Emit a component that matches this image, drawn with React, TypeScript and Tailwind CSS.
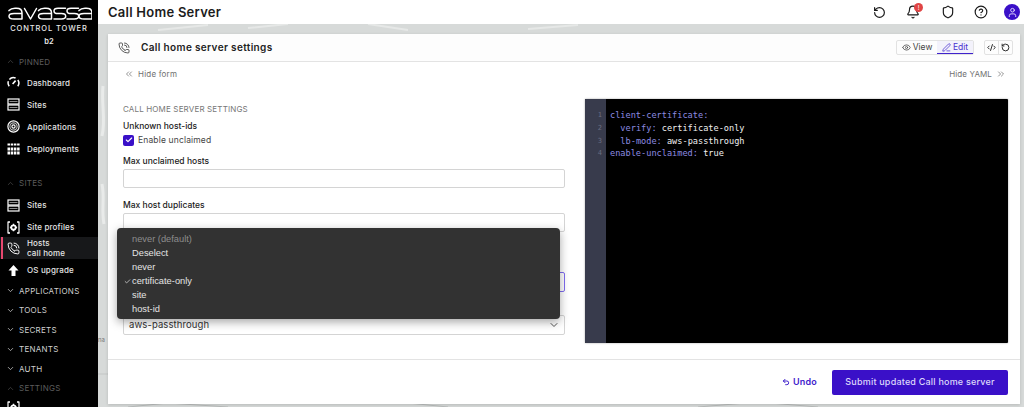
import React from "react";
import { ChevronUp, ChevronDown, ChevronsLeft, ChevronsRight, PhoneCall, RotateCcw, Bell, Shield, CircleHelp, User, Eye, PenLine, CodeXml, Undo2, Check } from "lucide-react";

function Logo() {
  const a = (x: number) => (
    <path d={`M${x + 1} 3.6 Q${x + 3} 1.3 ${x + 7} 1.3 H${x + 8.5} Q${x + 14} 1.3 ${x + 14} 6 V12 H${x + 6} Q${x + 1} 12 ${x + 1} 9.2 Q${x + 1} 6.6 ${x + 6} 6.6 H${x + 14}`} />
  );
  const s = (x: number) => (
    <path d={`M${x + 12.5} 1.3 H${x + 5} Q${x + 1} 1.3 ${x + 1} 4 Q${x + 1} 6.6 ${x + 5} 6.6 H${x + 8.5} Q${x + 12.7} 6.6 ${x + 12.7} 9.3 Q${x + 12.7} 12 ${x + 8.5} 12 H${x + 1}`} />
  );
  return (
    <svg width="84" height="14" viewBox="0 0 84 14" fill="none" stroke="white" strokeWidth="1.5" strokeLinecap="round" strokeLinejoin="round">
      {a(0)}
      <path d="M16.5 1.5 L22.5 12 L28.5 1.5" />
      {a(29.5)}
      {s(45)}
      {s(58)}
      {a(70)}
    </svg>
  );
}

const I = ({ children }: { children: React.ReactNode }) => (
  <svg width="13" height="13" viewBox="0 0 13 13" fill="none" stroke="white" strokeWidth="1.2">{children}</svg>
);
const GaugeIcon = () => (
  <I>
    <path d="M2.2 10.2 A5.2 5.2 0 0 1 1.4 5.2" strokeWidth="1.5" />
    <path d="M2.4 3.4 A5.2 5.2 0 0 1 8.6 2" strokeWidth="1.5" />
    <path d="M10.8 4 A5.2 5.2 0 0 1 10.8 10.2" strokeWidth="1.5" />
    <path d="M5.6 8 L8.6 4.6" strokeWidth="1.6" />
  </I>
);
const ServerIcon = () => (
  <I>
    <rect x="1" y="1" width="11" height="5" />
    <rect x="1" y="7" width="11" height="5" />
    <path d="M2.5 3.5 H10.5 M2.5 9.5 H10.5" stroke="#8a8a8a" strokeWidth="1.2" />
  </I>
);
const AppsIcon = () => (
  <I>
    <circle cx="6.5" cy="6.5" r="5.6" />
    <circle cx="6.5" cy="6.5" r="3.6" stroke="#b8b8b8" />
    <circle cx="6.5" cy="6.5" r="1.6" />
  </I>
);
const DeployIcon = () => (
  <svg width="13" height="13" viewBox="0 0 13 13" fill="white">
    {[1.5, 5.5, 9.5].map((y, r) =>
      [0.5, 3.7, 6.9, 10.1].map((x, c) => (
        <rect key={`${r}-${c}`} x={x} y={y} width="2.5" height={r === 0 ? 2 : 3} />
      ))
    )}
  </svg>
);
const ProfileIcon = () => (
  <I>
    <path d="M3 1 H1 V12 H3 M10 1 H12 V12 H10" />
    <path d="M1 1 H12 M1 12 H12" strokeDasharray="2 7" />
    <circle cx="6.5" cy="6.5" r="2.2" strokeWidth="1.8" />
    <path d="M6.5 2.8 V4 M6.5 9 V10.2 M2.9 6.5 H4.1 M8.9 6.5 H10.1" strokeWidth="1.4" />
  </I>
);
const UpIcon = () => (
  <svg width="13" height="13" viewBox="0 0 13 13" fill="white"><path d="M6.5 1 L11.5 6.5 H8.5 V12 H4.5 V6.5 H1.5 Z" /></svg>
);

function NavItem({ icon, label }: { icon: React.ReactNode; label: React.ReactNode }) {
  return (
    <div className="flex items-center h-[22px] pl-[7px] gap-[7px] text-[8px] font-medium text-[#e4e4e4] tracking-[0.15px]">
      <span className="w-[13px] flex justify-center shrink-0">{icon}</span>
      <span>{label}</span>
    </div>
  );
}

function Section({ label, open, dim }: { label: string; open?: boolean; dim?: boolean }) {
  return (
    <div className={`flex items-center h-[19.5px] pl-[6px] gap-[4px] text-[8px] tracking-[0.25px] ${dim ? "text-[#5c5c5c]" : "text-[#cfcfcf]"}`}>
      {open ? <ChevronUp size={9} strokeWidth={1.5} /> : <ChevronDown size={9} strokeWidth={2} />}
      <span>{label}</span>
    </div>
  );
}

function Field({ label, mt }: { label: string; mt: string }) {
  return (
    <div className={mt}>
      <div className="text-[8.5px] leading-[10px] font-medium text-[#222]">{label}</div>
      <div className="mt-[3px] h-[19px] rounded-[2px] border border-[#d4d4d4] bg-white" />
    </div>
  );
}

function MapBg() {
  return (
    <svg className="absolute inset-0" width="926" height="383" viewBox="0 0 926 383" fill="none">
      <path d="M5 62 C3 80 8 95 4 112 M4 160 C7 175 3 185 6 200" stroke="#e9ebea" strokeWidth="3" />
      <path d="M60 6 L110 1 M150 4 L190 0 M270 0 L310 6 M430 5 L480 1" stroke="#e6e8e7" strokeWidth="2" />
      <path d="M30 383 L70 379 L130 383 M310 379 L350 383 M600 383 L660 378 L720 383" stroke="#b9bcbb" strokeWidth="1" />
      <path d="M0 350 H10" stroke="#c3c6c5" />
    </svg>
  );
}

const menu = ["never (default)", "Deselect", "never", "certificate-only", "site", "host-id"];

export default function App() {
  return (
    <div className="relative w-[1024px] h-[407px] overflow-hidden flex bg-white font-['Inter',sans-serif]">
      <aside className="w-[98px] shrink-0 h-full bg-black overflow-hidden">
        <div className="pt-[7px] pl-[8px]"><Logo /></div>
        <div className="text-center text-[7.5px] leading-[10px] tracking-[0.9px] font-medium text-[#e8e8e8] mt-[3px]">CONTROL TOWER</div>
        <div className="text-center text-[7.5px] leading-[10px] font-semibold text-[#e8e8e8] mt-[3px]">b2</div>
        <div className="mt-[5px]"><Section label="PINNED" open dim /></div>
        <div>
          <NavItem icon={<GaugeIcon />} label="Dashboard" />
          <NavItem icon={<ServerIcon />} label="Sites" />
          <NavItem icon={<AppsIcon />} label="Applications" />
          <NavItem icon={<DeployIcon />} label="Deployments" />
        </div>
        <div className="mt-[14px]"><Section label="SITES" open dim /></div>
        <div className="mt-[1px]">
          <NavItem icon={<ServerIcon />} label="Sites" />
          <NavItem icon={<ProfileIcon />} label="Site profiles" />
          <div className="relative -mt-[1px]">
            <div className="absolute left-[1px] top-0 bottom-0 w-[2px] bg-[#e8486f]" />
            <div className="flex items-center h-[22px] pl-[7px] gap-[7px] text-[8px] font-medium text-[#e4e4e4] tracking-[0.15px] bg-[#17181a]">
              <PhoneCall size={13} strokeWidth={1.8} className="shrink-0 text-white" />
              <span className="leading-[10px]">Hosts<br />call home</span>
            </div>
          </div>
          <NavItem icon={<UpIcon />} label="OS upgrade" />
        </div>
        <div>
          <Section label="APPLICATIONS" />
          <Section label="TOOLS" />
          <Section label="SECRETS" />
          <Section label="TENANTS" />
          <Section label="AUTH" />
          <Section label="SETTINGS" open dim />
        </div>
        <div className="h-[8px] mt-[3px] pl-[7px] overflow-hidden"><ProfileIcon /></div>
      </aside>

      <div className="flex-1 min-w-0 flex flex-col">
        <header className="h-[24px] shrink-0 bg-white flex items-center pl-[10px] pr-[4px]">
          <h1 className="text-[13px] font-semibold text-[#1c1c1c] tracking-[0.25px] mt-[1px]">Call Home Server</h1>
          <div className="ml-auto flex items-center text-[#1a1a1a]">
            <RotateCcw size={13} strokeWidth={2.2} />
            <div className="relative ml-[20px]">
              <Bell size={14} strokeWidth={2} />
              <span className="absolute left-[8px] -top-[2px] w-[9px] h-[9px] rounded-full bg-[#e04545] text-white text-[6px] leading-[9px] text-center">!</span>
            </div>
            <Shield size={14} strokeWidth={2} className="ml-[21px]" />
            <CircleHelp size={14} strokeWidth={2} className="ml-[19px]" />
            <span className="ml-[16px] w-[16px] h-[16px] rounded-full bg-[#3a10c8] flex items-center justify-center">
              <User size={11} color="#e8e0ff" />
            </span>
          </div>
        </header>

        <main className="relative flex-1 bg-[#d7dad9] pl-[10px] pr-[4px] pt-[10px] pb-[3px]">
          <MapBg />
          <span className="absolute left-[0px] top-[311px] text-[6px] text-[#777]">na</span>
          <section className="relative h-full bg-white flex flex-col shadow-[0_1px_3px_rgba(0,0,0,0.15)]">
            <div className="h-[28px] shrink-0 border-b border-[#e3e3e3] bg-[#fdfdfd] flex items-center pl-[10px] pr-[7px]">
              <PhoneCall size={12} strokeWidth={1.6} className="text-[#333]" />
              <h2 className="ml-[11px] text-[10px] font-semibold text-[#222] tracking-[0.35px]">Call home server settings</h2>
              <div className="ml-auto flex items-center">
                <div className="flex h-[15px] rounded-[2px] border border-[#e2e2e2] text-[8.5px] text-[#444]">
                  <span className="w-[40px] flex items-center justify-center gap-[2px]"><Eye size={9} />View</span>
                  <span className="w-[36px] flex items-center justify-center gap-[2px] bg-[#f3f2fb] text-[#4a30d0] border-b border-[#3f22cc]"><PenLine size={9} />Edit</span>
                </div>
                <div className="ml-[10px] flex h-[15px] w-[29px] rounded-[2px] border border-[#e2e2e2] text-[#222]">
                  <span className="flex-1 flex items-center justify-center border-r border-[#e2e2e2]"><CodeXml size={9} strokeWidth={2.5} /></span>
                  <span className="flex-1 flex items-center justify-center"><RotateCcw size={9} strokeWidth={2.5} /></span>
                </div>
              </div>
            </div>

            <div className="flex-1 min-h-0 flex flex-col">
              <div className="flex justify-between items-center h-[24px] pl-[16px] pr-[14px] text-[8px] text-[#6f6f6f] tracking-[0.1px]">
                <span className="flex items-center gap-[4px] tracking-[0.2px]"><ChevronsLeft size={10} strokeWidth={1.8} />Hide form</span>
                <span className="flex items-center gap-[4px]">Hide YAML<ChevronsRight size={10} strokeWidth={1.8} /></span>
              </div>
              <div className="flex-1 min-h-0 flex pl-[15px] pr-[12px] pb-[15px]">
                <form className="relative w-[442px] shrink-0 pt-[18px]">
                  <div className="text-[8px] leading-[10px] text-[#777] tracking-[0.15px]">CALL HOME SERVER SETTINGS</div>
                  <div className="mt-[7px] text-[8.5px] leading-[10px] font-medium text-[#222]">Unknown host-ids</div>
                  <label className="mt-[3px] flex items-center gap-[4px] text-[8.5px] text-[#444] tracking-[0.15px]">
                    <span className="w-[11px] h-[11px] rounded-[2px] bg-[#3a10c8] flex items-center justify-center"><Check size={8} color="white" strokeWidth={3.5} /></span>
                    Enable unclaimed
                  </label>
                  <Field label="Max unclaimed hosts" mt="mt-[9px]" />
                  <Field label="Max host duplicates" mt="mt-[12px]" />
                  <div className="mt-[40px] h-[20px] rounded-[2px] border border-[#7f6cf0] bg-white" />
                  <div className="mt-[23px] h-[20px] rounded-[2px] border border-[#d4d4d4] bg-white flex items-center pl-[5px] pr-[4px] text-[9.5px] text-[#333] tracking-[0.1px]">
                    aws-passthrough
                    <ChevronDown size={12} className="ml-auto text-[#555]" />
                  </div>
                  <ul className="absolute left-[-6px] top-[142px] w-[443px] h-[91px] rounded-[4px] bg-[#323232] shadow-[0_3px_10px_rgba(0,0,0,0.35)] py-[4px] font-['Liberation_Sans',sans-serif] text-[9.3px] leading-[14px] text-[#e4e4e4]">
                    {menu.map((m, i) => (
                      <li key={m} className={`relative pl-[15px] ${i === 0 ? "text-[#8d8d8d]" : ""}`}>
                        {m === "certificate-only" && <Check size={7} strokeWidth={2.5} className="absolute left-[7px] top-[4px]" />}
                        {m}
                      </li>
                    ))}
                  </ul>
                </form>
                <div className="ml-[20px] mt-[13px] mb-[1px] flex-1 flex bg-black shadow-[0_0_2px_rgba(0,0,0,0.4)] rounded-[1px] overflow-hidden font-['DejaVu_Sans_Mono',monospace] text-[8.6px] leading-[12.8px]">
                  <div className="w-[21px] shrink-0 bg-[#383b4c] pt-[10px] pr-[4px] text-right text-[#6a6d80] text-[7px]">
                    <div>1</div><div>2</div><div>3</div><div>4</div>
                  </div>
                  <div className="pl-[4px] pt-[10px] whitespace-pre text-[#f0f0f0]">
                    <div className="text-[#8d8be0]">client-certificate:</div>
                    <div>{"  "}<span className="text-[#8d8be0]">verify:</span> certificate-only</div>
                    <div>{"  "}<span className="text-[#8d8be0]">lb-mode:</span> aws-passthrough</div>
                    <div><span className="text-[#8d8be0]">enable-unclaimed:</span> true</div>
                  </div>
                </div>
              </div>
            </div>

            <div className="h-[45px] shrink-0 border-t border-[#e3e3e3] flex items-center justify-end pr-[12px]">
              <span className="flex items-center gap-[3px] text-[9px] font-semibold text-[#3f22cc] tracking-[0.2px]"><Undo2 size={8} strokeWidth={3} />Undo</span>
              <button className="ml-[15px] w-[176px] h-[25px] rounded-[2px] bg-[#3a10c8] text-[9px] font-medium text-[#ddd8fa] tracking-[0.2px]">Submit updated Call home server</button>
            </div>
          </section>
        </main>
      </div>
    </div>
  );
}
